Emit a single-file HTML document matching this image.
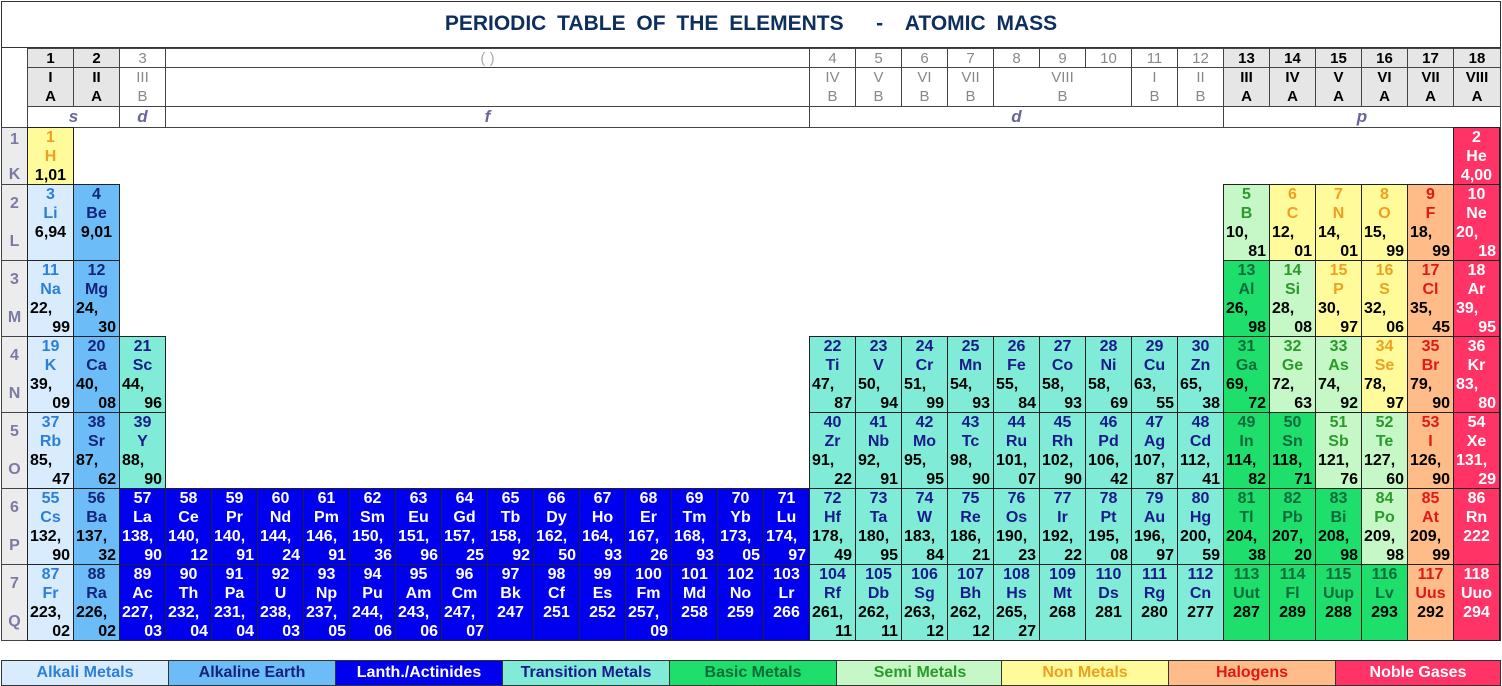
<!DOCTYPE html>
<html><head><meta charset="utf-8">
<style>
*{margin:0;padding:0}
body{width:1502px;height:686px;background:#fff;position:relative;overflow:hidden;font-family:"Liberation Sans",Arial,sans-serif}
.a{position:absolute;box-sizing:border-box}
.title{left:1px;top:1px;width:1500px;height:47px;border:1px solid #333;text-align:center;font:bold 21px/44px "Liberation Sans",sans-serif;color:#0d2f5e;word-spacing:5px}
.frame{left:1px;top:47px;width:1500px;height:594px;border:1px solid #333;border-top:none}
.c{position:absolute;width:47px;height:77px;box-sizing:border-box;border:1px solid #222;font:bold 16px/19px "Liberation Sans",sans-serif;text-align:center}
.c b,.c i,.c u,.c s{display:block;font-style:normal;text-decoration:none;white-space:nowrap}
.c i{text-align:left;padding-left:2px;color:#000}
.c s{text-align:center;color:#000}
.c u{text-align:right;padding-right:3px;color:#000}
.alk{background:#d9ecfd;color:#2a7fd8}
.ae{background:#6cbcf8;color:#14237a}
.la{background:#0000ee;color:#fff}
.la i,.la u,.la s,.ng i,.ng u,.ng s{color:#fff}
.tr{background:#80ecd8;color:#1a1a8a}
.bm{background:#1ede6c;color:#0b6b3a}
.sm{background:#c6f7c6;color:#2a9a2a}
.nm{background:#fffb9a;color:#f0a020}
.ha{background:#ffbb88;color:#e01818}
.ng{background:#ff3366;color:#fff}
.h{position:absolute;box-sizing:border-box;border:1px solid #444;text-align:center;font:15px/19px "Liberation Sans",sans-serif;color:#888}
.hd{background:#e6e6e6;color:#000;font-weight:bold}
.bl{position:absolute;box-sizing:border-box;border:1px solid #444;text-align:center;font:italic bold 17px/20px "Liberation Sans",sans-serif;color:#666699}
.p{position:absolute;left:1px;width:27px;box-sizing:border-box;border:1px solid #444;background:#ececec;color:#7a7aa6;font:bold 16px/19px "Liberation Sans",sans-serif;text-align:center}
.p span{position:absolute;left:0;right:0}
.lg{position:absolute;top:660px;height:26px;box-sizing:border-box;border:1px solid #333;text-align:center;font:bold 16px/24px "Liberation Sans",sans-serif}
</style></head><body>
<div class="a title">PERIODIC TABLE OF THE ELEMENTS&nbsp;&nbsp; - &nbsp;ATOMIC MASS</div>
<div class="a frame"></div>

<div class="h hd" style="left:27px;top:48px;width:47px;height:20px">1</div>
<div class="h hd" style="left:73px;top:48px;width:47px;height:20px">2</div>
<div class="h" style="left:119px;top:48px;width:47px;height:20px">3</div>
<div class="h" style="left:165px;top:48px;width:645px;height:20px;color:#aaa">( )</div>
<div class="h" style="left:809px;top:48px;width:47px;height:20px">4</div>
<div class="h" style="left:855px;top:48px;width:47px;height:20px">5</div>
<div class="h" style="left:901px;top:48px;width:47px;height:20px">6</div>
<div class="h" style="left:947px;top:48px;width:47px;height:20px">7</div>
<div class="h" style="left:993px;top:48px;width:47px;height:20px">8</div>
<div class="h" style="left:1039px;top:48px;width:47px;height:20px">9</div>
<div class="h" style="left:1085px;top:48px;width:47px;height:20px">10</div>
<div class="h" style="left:1131px;top:48px;width:47px;height:20px">11</div>
<div class="h" style="left:1177px;top:48px;width:47px;height:20px">12</div>
<div class="h hd" style="left:1223px;top:48px;width:47px;height:20px">13</div>
<div class="h hd" style="left:1269px;top:48px;width:47px;height:20px">14</div>
<div class="h hd" style="left:1315px;top:48px;width:47px;height:20px">15</div>
<div class="h hd" style="left:1361px;top:48px;width:47px;height:20px">16</div>
<div class="h hd" style="left:1407px;top:48px;width:47px;height:20px">17</div>
<div class="h hd" style="left:1453px;top:48px;width:48px;height:20px">18</div>
<div class="h hd" style="left:27px;top:67px;width:47px;height:40px">I<br>A</div>
<div class="h hd" style="left:73px;top:67px;width:47px;height:40px">II<br>A</div>
<div class="h" style="left:119px;top:67px;width:47px;height:40px">III<br>B</div>
<div class="h" style="left:165px;top:67px;width:645px;height:40px"></div>
<div class="h" style="left:809px;top:67px;width:47px;height:40px">IV<br>B</div>
<div class="h" style="left:855px;top:67px;width:47px;height:40px">V<br>B</div>
<div class="h" style="left:901px;top:67px;width:47px;height:40px">VI<br>B</div>
<div class="h" style="left:947px;top:67px;width:47px;height:40px">VII<br>B</div>
<div class="h" style="left:993px;top:67px;width:139px;height:40px">VIII<br>B</div>
<div class="h" style="left:1131px;top:67px;width:47px;height:40px">I<br>B</div>
<div class="h" style="left:1177px;top:67px;width:47px;height:40px">II<br>B</div>
<div class="h hd" style="left:1223px;top:67px;width:47px;height:40px">III<br>A</div>
<div class="h hd" style="left:1269px;top:67px;width:47px;height:40px">IV<br>A</div>
<div class="h hd" style="left:1315px;top:67px;width:47px;height:40px">V<br>A</div>
<div class="h hd" style="left:1361px;top:67px;width:47px;height:40px">VI<br>A</div>
<div class="h hd" style="left:1407px;top:67px;width:47px;height:40px">VII<br>A</div>
<div class="h hd" style="left:1453px;top:67px;width:48px;height:40px">VIII<br>A</div>
<div class="bl" style="left:27px;top:106px;width:93px;height:22px">s</div>
<div class="bl" style="left:119px;top:106px;width:47px;height:22px">d</div>
<div class="bl" style="left:165px;top:106px;width:645px;height:22px">f</div>
<div class="bl" style="left:809px;top:106px;width:415px;height:22px">d</div>
<div class="bl" style="left:1223px;top:106px;width:278px;height:22px">p</div>

<div class="p" style="top:127px;height:58px"><span style="top:2px">1</span><span style="top:37px">K</span></div>
<div class="p" style="top:184px;height:77px"><span style="top:9px">2</span><span style="top:47px">L</span></div>
<div class="p" style="top:260px;height:77px"><span style="top:9px">3</span><span style="top:47px">M</span></div>
<div class="p" style="top:336px;height:77px"><span style="top:9px">4</span><span style="top:47px">N</span></div>
<div class="p" style="top:412px;height:77px"><span style="top:9px">5</span><span style="top:47px">O</span></div>
<div class="p" style="top:488px;height:77px"><span style="top:9px">6</span><span style="top:47px">P</span></div>
<div class="p" style="top:564px;height:77px"><span style="top:9px">7</span><span style="top:47px">Q</span></div>

<div class="c nm" style="left:27px;top:127px;height:58px"><b>1</b><b>H</b><s>1,01</s></div>
<div class="c ng" style="left:1453px;top:127px;height:58px"><b>2</b><b>He</b><s>4,00</s></div>
<div class="c alk" style="left:27px;top:184px"><b>3</b><b>Li</b><s>6,94</s></div>
<div class="c ae" style="left:73px;top:184px"><b>4</b><b>Be</b><s>9,01</s></div>
<div class="c sm" style="left:1223px;top:184px"><b>5</b><b>B</b><i>10,</i><u>81</u></div>
<div class="c nm" style="left:1269px;top:184px"><b>6</b><b>C</b><i>12,</i><u>01</u></div>
<div class="c nm" style="left:1315px;top:184px"><b>7</b><b>N</b><i>14,</i><u>01</u></div>
<div class="c nm" style="left:1361px;top:184px"><b>8</b><b>O</b><i>15,</i><u>99</u></div>
<div class="c ha" style="left:1407px;top:184px"><b>9</b><b>F</b><i>18,</i><u>99</u></div>
<div class="c ng" style="left:1453px;top:184px"><b>10</b><b>Ne</b><i>20,</i><u>18</u></div>
<div class="c alk" style="left:27px;top:260px"><b>11</b><b>Na</b><i>22,</i><u>99</u></div>
<div class="c ae" style="left:73px;top:260px"><b>12</b><b>Mg</b><i>24,</i><u>30</u></div>
<div class="c bm" style="left:1223px;top:260px"><b>13</b><b>Al</b><i>26,</i><u>98</u></div>
<div class="c sm" style="left:1269px;top:260px"><b>14</b><b>Si</b><i>28,</i><u>08</u></div>
<div class="c nm" style="left:1315px;top:260px"><b>15</b><b>P</b><i>30,</i><u>97</u></div>
<div class="c nm" style="left:1361px;top:260px"><b>16</b><b>S</b><i>32,</i><u>06</u></div>
<div class="c ha" style="left:1407px;top:260px"><b>17</b><b>Cl</b><i>35,</i><u>45</u></div>
<div class="c ng" style="left:1453px;top:260px"><b>18</b><b>Ar</b><i>39,</i><u>95</u></div>
<div class="c alk" style="left:27px;top:336px"><b>19</b><b>K</b><i>39,</i><u>09</u></div>
<div class="c ae" style="left:73px;top:336px"><b>20</b><b>Ca</b><i>40,</i><u>08</u></div>
<div class="c tr" style="left:119px;top:336px"><b>21</b><b>Sc</b><i>44,</i><u>96</u></div>
<div class="c tr" style="left:809px;top:336px"><b>22</b><b>Ti</b><i>47,</i><u>87</u></div>
<div class="c tr" style="left:855px;top:336px"><b>23</b><b>V</b><i>50,</i><u>94</u></div>
<div class="c tr" style="left:901px;top:336px"><b>24</b><b>Cr</b><i>51,</i><u>99</u></div>
<div class="c tr" style="left:947px;top:336px"><b>25</b><b>Mn</b><i>54,</i><u>93</u></div>
<div class="c tr" style="left:993px;top:336px"><b>26</b><b>Fe</b><i>55,</i><u>84</u></div>
<div class="c tr" style="left:1039px;top:336px"><b>27</b><b>Co</b><i>58,</i><u>93</u></div>
<div class="c tr" style="left:1085px;top:336px"><b>28</b><b>Ni</b><i>58,</i><u>69</u></div>
<div class="c tr" style="left:1131px;top:336px"><b>29</b><b>Cu</b><i>63,</i><u>55</u></div>
<div class="c tr" style="left:1177px;top:336px"><b>30</b><b>Zn</b><i>65,</i><u>38</u></div>
<div class="c bm" style="left:1223px;top:336px"><b>31</b><b>Ga</b><i>69,</i><u>72</u></div>
<div class="c sm" style="left:1269px;top:336px"><b>32</b><b>Ge</b><i>72,</i><u>63</u></div>
<div class="c sm" style="left:1315px;top:336px"><b>33</b><b>As</b><i>74,</i><u>92</u></div>
<div class="c nm" style="left:1361px;top:336px"><b>34</b><b>Se</b><i>78,</i><u>97</u></div>
<div class="c ha" style="left:1407px;top:336px"><b>35</b><b>Br</b><i>79,</i><u>90</u></div>
<div class="c ng" style="left:1453px;top:336px"><b>36</b><b>Kr</b><i>83,</i><u>80</u></div>
<div class="c alk" style="left:27px;top:412px"><b>37</b><b>Rb</b><i>85,</i><u>47</u></div>
<div class="c ae" style="left:73px;top:412px"><b>38</b><b>Sr</b><i>87,</i><u>62</u></div>
<div class="c tr" style="left:119px;top:412px"><b>39</b><b>Y</b><i>88,</i><u>90</u></div>
<div class="c tr" style="left:809px;top:412px"><b>40</b><b>Zr</b><i>91,</i><u>22</u></div>
<div class="c tr" style="left:855px;top:412px"><b>41</b><b>Nb</b><i>92,</i><u>91</u></div>
<div class="c tr" style="left:901px;top:412px"><b>42</b><b>Mo</b><i>95,</i><u>95</u></div>
<div class="c tr" style="left:947px;top:412px"><b>43</b><b>Tc</b><i>98,</i><u>90</u></div>
<div class="c tr" style="left:993px;top:412px"><b>44</b><b>Ru</b><i>101,</i><u>07</u></div>
<div class="c tr" style="left:1039px;top:412px"><b>45</b><b>Rh</b><i>102,</i><u>90</u></div>
<div class="c tr" style="left:1085px;top:412px"><b>46</b><b>Pd</b><i>106,</i><u>42</u></div>
<div class="c tr" style="left:1131px;top:412px"><b>47</b><b>Ag</b><i>107,</i><u>87</u></div>
<div class="c tr" style="left:1177px;top:412px"><b>48</b><b>Cd</b><i>112,</i><u>41</u></div>
<div class="c bm" style="left:1223px;top:412px"><b>49</b><b>In</b><i>114,</i><u>82</u></div>
<div class="c bm" style="left:1269px;top:412px"><b>50</b><b>Sn</b><i>118,</i><u>71</u></div>
<div class="c sm" style="left:1315px;top:412px"><b>51</b><b>Sb</b><i>121,</i><u>76</u></div>
<div class="c sm" style="left:1361px;top:412px"><b>52</b><b>Te</b><i>127,</i><u>60</u></div>
<div class="c ha" style="left:1407px;top:412px"><b>53</b><b>I</b><i>126,</i><u>90</u></div>
<div class="c ng" style="left:1453px;top:412px"><b>54</b><b>Xe</b><i>131,</i><u>29</u></div>
<div class="c alk" style="left:27px;top:488px"><b>55</b><b>Cs</b><i>132,</i><u>90</u></div>
<div class="c ae" style="left:73px;top:488px"><b>56</b><b>Ba</b><i>137,</i><u>32</u></div>
<div class="c la" style="left:119px;top:488px"><b>57</b><b>La</b><i>138,</i><u>90</u></div>
<div class="c la" style="left:165px;top:488px"><b>58</b><b>Ce</b><i>140,</i><u>12</u></div>
<div class="c la" style="left:211px;top:488px"><b>59</b><b>Pr</b><i>140,</i><u>91</u></div>
<div class="c la" style="left:257px;top:488px"><b>60</b><b>Nd</b><i>144,</i><u>24</u></div>
<div class="c la" style="left:303px;top:488px"><b>61</b><b>Pm</b><i>146,</i><u>91</u></div>
<div class="c la" style="left:349px;top:488px"><b>62</b><b>Sm</b><i>150,</i><u>36</u></div>
<div class="c la" style="left:395px;top:488px"><b>63</b><b>Eu</b><i>151,</i><u>96</u></div>
<div class="c la" style="left:441px;top:488px"><b>64</b><b>Gd</b><i>157,</i><u>25</u></div>
<div class="c la" style="left:487px;top:488px"><b>65</b><b>Tb</b><i>158,</i><u>92</u></div>
<div class="c la" style="left:533px;top:488px"><b>66</b><b>Dy</b><i>162,</i><u>50</u></div>
<div class="c la" style="left:579px;top:488px"><b>67</b><b>Ho</b><i>164,</i><u>93</u></div>
<div class="c la" style="left:625px;top:488px"><b>68</b><b>Er</b><i>167,</i><u>26</u></div>
<div class="c la" style="left:671px;top:488px"><b>69</b><b>Tm</b><i>168,</i><u>93</u></div>
<div class="c la" style="left:717px;top:488px"><b>70</b><b>Yb</b><i>173,</i><u>05</u></div>
<div class="c la" style="left:763px;top:488px"><b>71</b><b>Lu</b><i>174,</i><u>97</u></div>
<div class="c tr" style="left:809px;top:488px"><b>72</b><b>Hf</b><i>178,</i><u>49</u></div>
<div class="c tr" style="left:855px;top:488px"><b>73</b><b>Ta</b><i>180,</i><u>95</u></div>
<div class="c tr" style="left:901px;top:488px"><b>74</b><b>W</b><i>183,</i><u>84</u></div>
<div class="c tr" style="left:947px;top:488px"><b>75</b><b>Re</b><i>186,</i><u>21</u></div>
<div class="c tr" style="left:993px;top:488px"><b>76</b><b>Os</b><i>190,</i><u>23</u></div>
<div class="c tr" style="left:1039px;top:488px"><b>77</b><b>Ir</b><i>192,</i><u>22</u></div>
<div class="c tr" style="left:1085px;top:488px"><b>78</b><b>Pt</b><i>195,</i><u>08</u></div>
<div class="c tr" style="left:1131px;top:488px"><b>79</b><b>Au</b><i>196,</i><u>97</u></div>
<div class="c tr" style="left:1177px;top:488px"><b>80</b><b>Hg</b><i>200,</i><u>59</u></div>
<div class="c bm" style="left:1223px;top:488px"><b>81</b><b>Tl</b><i>204,</i><u>38</u></div>
<div class="c bm" style="left:1269px;top:488px"><b>82</b><b>Pb</b><i>207,</i><u>20</u></div>
<div class="c bm" style="left:1315px;top:488px"><b>83</b><b>Bi</b><i>208,</i><u>98</u></div>
<div class="c sm" style="left:1361px;top:488px"><b>84</b><b>Po</b><i>209,</i><u>98</u></div>
<div class="c ha" style="left:1407px;top:488px"><b>85</b><b>At</b><i>209,</i><u>99</u></div>
<div class="c ng" style="left:1453px;top:488px"><b>86</b><b>Rn</b><s>222</s></div>
<div class="c alk" style="left:27px;top:564px"><b>87</b><b>Fr</b><i>223,</i><u>02</u></div>
<div class="c ae" style="left:73px;top:564px"><b>88</b><b>Ra</b><i>226,</i><u>02</u></div>
<div class="c la" style="left:119px;top:564px"><b>89</b><b>Ac</b><i>227,</i><u>03</u></div>
<div class="c la" style="left:165px;top:564px"><b>90</b><b>Th</b><i>232,</i><u>04</u></div>
<div class="c la" style="left:211px;top:564px"><b>91</b><b>Pa</b><i>231,</i><u>04</u></div>
<div class="c la" style="left:257px;top:564px"><b>92</b><b>U</b><i>238,</i><u>03</u></div>
<div class="c la" style="left:303px;top:564px"><b>93</b><b>Np</b><i>237,</i><u>05</u></div>
<div class="c la" style="left:349px;top:564px"><b>94</b><b>Pu</b><i>244,</i><u>06</u></div>
<div class="c la" style="left:395px;top:564px"><b>95</b><b>Am</b><i>243,</i><u>06</u></div>
<div class="c la" style="left:441px;top:564px"><b>96</b><b>Cm</b><i>247,</i><u>07</u></div>
<div class="c la" style="left:487px;top:564px"><b>97</b><b>Bk</b><s>247</s></div>
<div class="c la" style="left:533px;top:564px"><b>98</b><b>Cf</b><s>251</s></div>
<div class="c la" style="left:579px;top:564px"><b>99</b><b>Es</b><s>252</s></div>
<div class="c la" style="left:625px;top:564px"><b>100</b><b>Fm</b><i>257,</i><u>09</u></div>
<div class="c la" style="left:671px;top:564px"><b>101</b><b>Md</b><s>258</s></div>
<div class="c la" style="left:717px;top:564px"><b>102</b><b>No</b><s>259</s></div>
<div class="c la" style="left:763px;top:564px"><b>103</b><b>Lr</b><s>266</s></div>
<div class="c tr" style="left:809px;top:564px"><b>104</b><b>Rf</b><i>261,</i><u>11</u></div>
<div class="c tr" style="left:855px;top:564px"><b>105</b><b>Db</b><i>262,</i><u>11</u></div>
<div class="c tr" style="left:901px;top:564px"><b>106</b><b>Sg</b><i>263,</i><u>12</u></div>
<div class="c tr" style="left:947px;top:564px"><b>107</b><b>Bh</b><i>262,</i><u>12</u></div>
<div class="c tr" style="left:993px;top:564px"><b>108</b><b>Hs</b><i>265,</i><u>27</u></div>
<div class="c tr" style="left:1039px;top:564px"><b>109</b><b>Mt</b><s>268</s></div>
<div class="c tr" style="left:1085px;top:564px"><b>110</b><b>Ds</b><s>281</s></div>
<div class="c tr" style="left:1131px;top:564px"><b>111</b><b>Rg</b><s>280</s></div>
<div class="c tr" style="left:1177px;top:564px"><b>112</b><b>Cn</b><s>277</s></div>
<div class="c bm" style="left:1223px;top:564px"><b>113</b><b>Uut</b><s>287</s></div>
<div class="c bm" style="left:1269px;top:564px"><b>114</b><b>Fl</b><s>289</s></div>
<div class="c bm" style="left:1315px;top:564px"><b>115</b><b>Uup</b><s>288</s></div>
<div class="c bm" style="left:1361px;top:564px"><b>116</b><b>Lv</b><s>293</s></div>
<div class="c ha" style="left:1407px;top:564px"><b>117</b><b>Uus</b><s>292</s></div>
<div class="c ng" style="left:1453px;top:564px"><b>118</b><b>Uuo</b><s>294</s></div>

<div class="lg alk" style="left:1px;width:168px">Alkali Metals</div>
<div class="lg ae" style="left:168px;width:168px">Alkaline Earth</div>
<div class="lg la" style="left:335px;width:168px">Lanth./Actinides</div>
<div class="lg tr" style="left:502px;width:168px">Transition Metals</div>
<div class="lg bm" style="left:669px;width:168px">Basic Metals</div>
<div class="lg sm" style="left:836px;width:168px">Semi Metals</div>
<div class="lg nm" style="left:1001px;width:168px">Non Metals</div>
<div class="lg ha" style="left:1168px;width:168px">Halogens</div>
<div class="lg ng" style="left:1335px;width:166px">Noble Gases</div>
</body></html>
